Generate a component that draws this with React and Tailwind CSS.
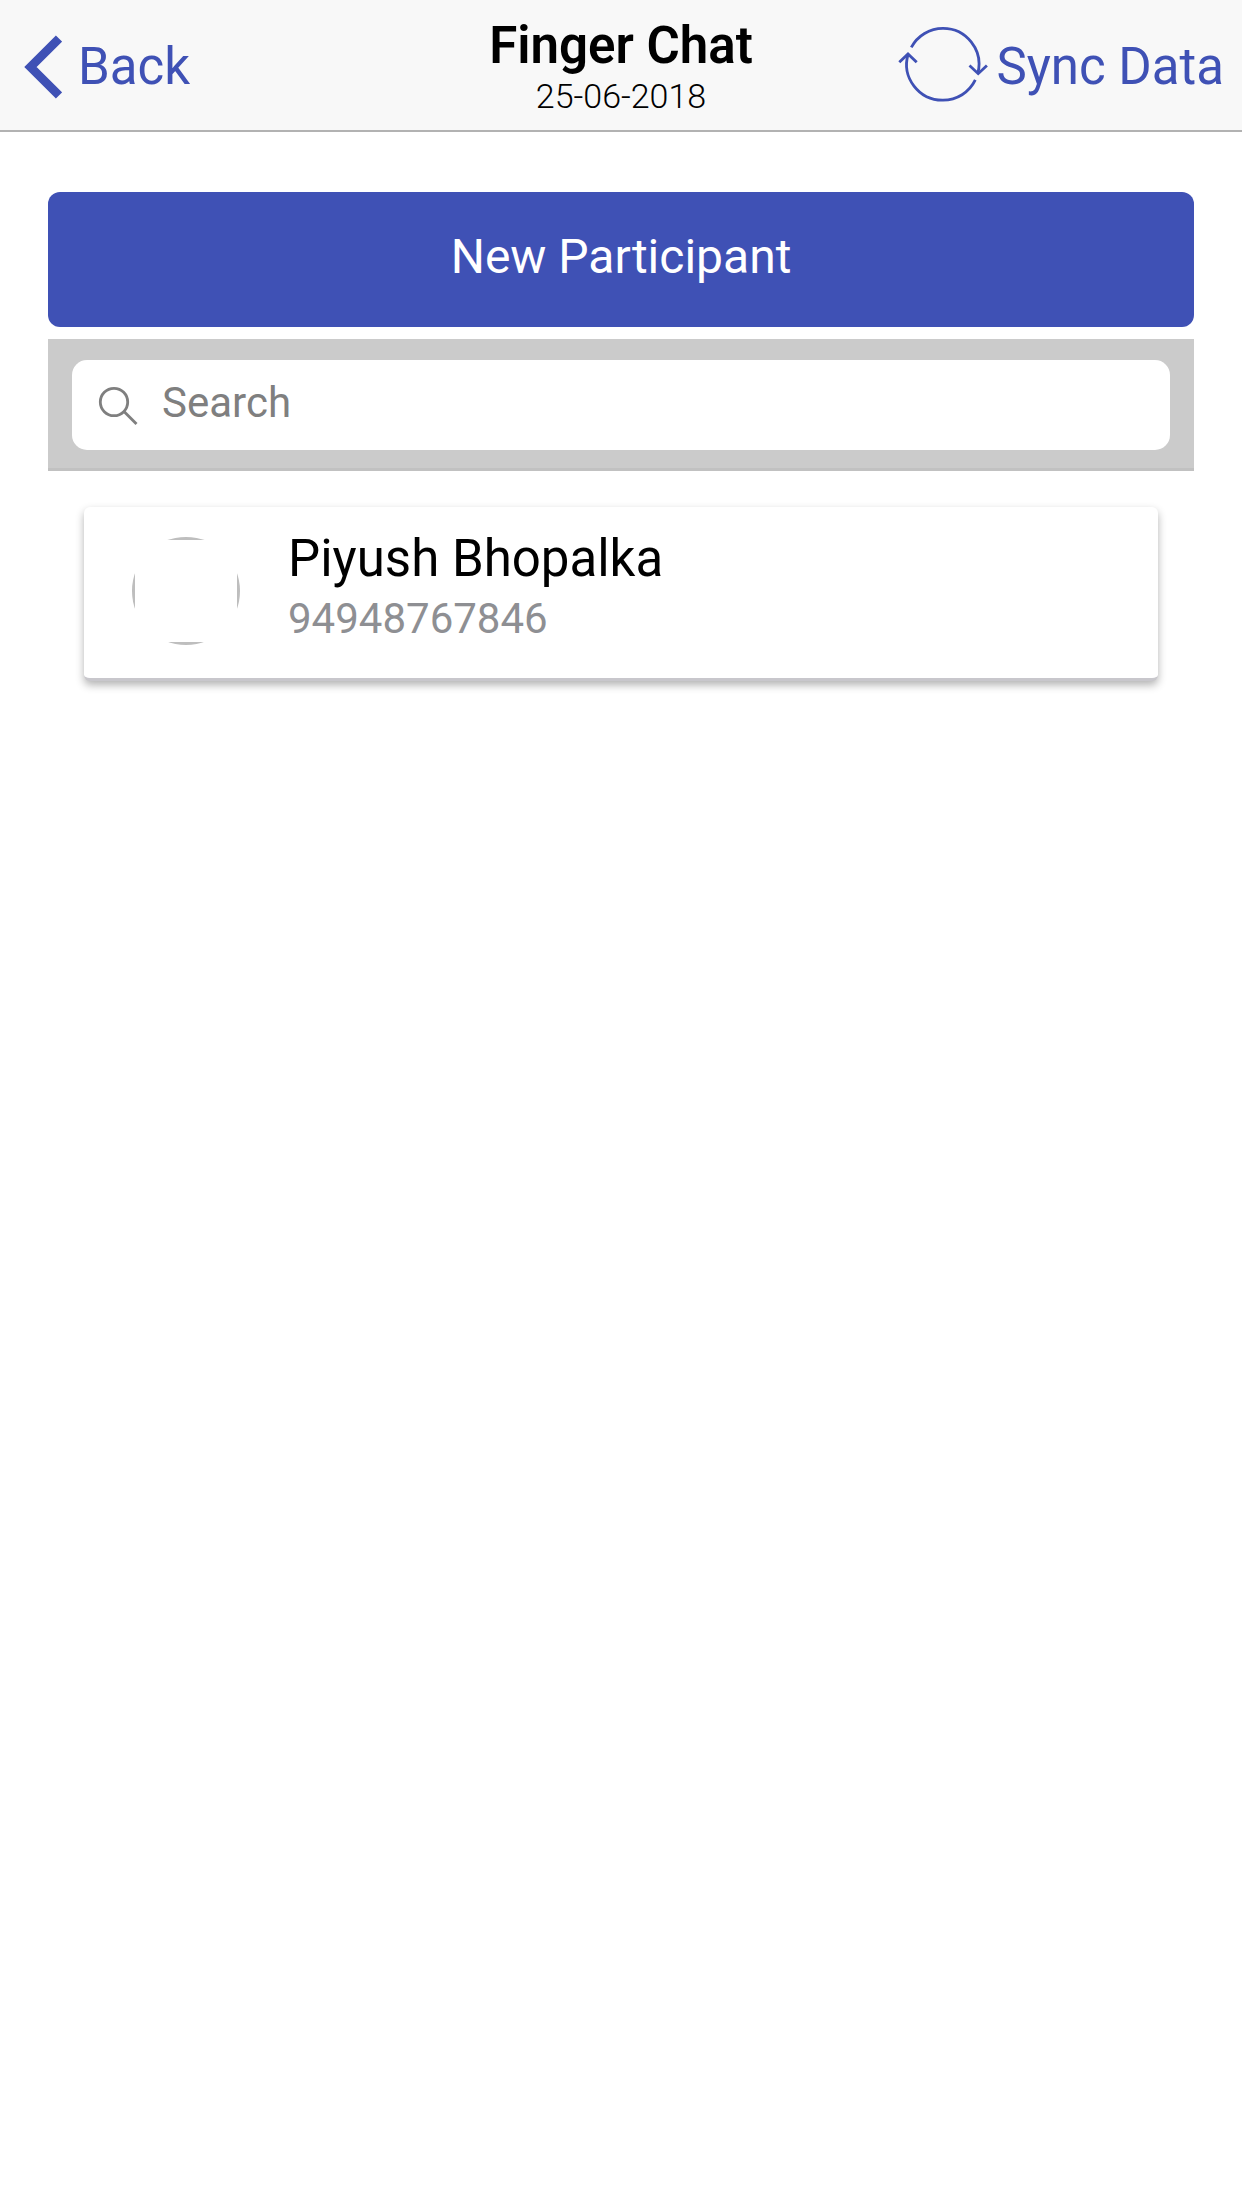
import React from "react";

const participants = [{ name: "Piyush Bhopalka", phone: "94948767846" }];

function ChevronLeft() {
  return (
    <svg className="h-16 w-10 shrink-0" viewBox="0 0 40 64" fill="none" aria-hidden="true">
      <path d="M37 3.500 L8.500 32 L37 60.500" stroke="currentColor" strokeWidth="8.8" />
    </svg>
  );
}

function SyncIcon() {
  return (
    <svg
      className="h-20 w-[90px] shrink-0"
      viewBox="0 0 90 80"
      fill="none"
      stroke="currentColor"
      strokeWidth="2.8"
      aria-hidden="true"
    >
      <path d="M13.300 20.450 A35.900 35.900 0 0 1 45 1.400 A35.900 35.900 0 0 1 79.900 46" />
      <path d="M77.300 52.900 A35.900 35.900 0 0 1 45 73.200 A35.900 35.900 0 0 1 10 27.500" />
      <path d="M1.300 35.300 L10 26.900 L18.700 35.300" />
      <path d="M71.500 38.500 L80.200 46.700 L88.900 38.500" />
    </svg>
  );
}

function SearchIcon() {
  return (
    <svg
      className="size-10 shrink-0"
      viewBox="0 0 40 40"
      fill="none"
      stroke="currentColor"
      strokeWidth="2.8"
      aria-hidden="true"
    >
      <circle cx="16" cy="17" r="13.7" />
      <path d="M25.500 26 L38.500 39" />
    </svg>
  );
}

function Header() {
  return (
    <header className="grid h-[132px] grid-cols-[1fr_auto_1fr] items-center border-b-2 border-[#b2b2b2] bg-[#f8f8f8]">
      <button
        type="button"
        className="flex items-center gap-4 justify-self-start pt-1 pl-[22px] text-[51px] leading-[60px] text-[#3f51b5]"
      >
        <ChevronLeft />
        Back
      </button>
      <div className="pt-0.5 text-center text-black">
        <h1 className="text-[51px] leading-[60px] font-semibold">Finger Chat</h1>
        <p className="text-[34px] leading-[41px] font-light">25-06-2018</p>
      </div>
      <button
        type="button"
        className="flex items-center gap-2 justify-self-end pt-1 pr-[18px] text-[51px] leading-[60px] whitespace-nowrap text-[#3f51b5]"
      >
        <SyncIcon />
        Sync Data
      </button>
    </header>
  );
}

function SearchBar() {
  return (
    <div className="mt-3 border-b-[3px] border-[#c1c1c1] bg-[#cbcbcb] px-6 pt-[21px] pb-[18px]">
      <label className="flex h-[90px] items-center gap-6 rounded-[15px] bg-white px-[26px] text-[#7f7f7f]">
        <SearchIcon />
        <input
          type="search"
          placeholder="Search"
          aria-label="Search"
          className="h-full min-w-0 flex-1 bg-transparent pb-1.5 text-[42px] text-black outline-none placeholder:text-[#7f7f7f]"
        />
      </label>
    </div>
  );
}

function Avatar() {
  return (
    <div className="mt-2 flex size-[108px] shrink-0 items-center justify-center rounded-full bg-[#bebebe]">
      <div className="size-[102px] bg-white" />
    </div>
  );
}

function ParticipantCard({ name, phone }) {
  return (
    <li className="flex items-start gap-12 rounded-md border-b-[3px] border-[#c8c7cc] bg-white px-12 pt-[22px] pb-[33px] shadow-[0_4px_8px_rgba(0,0,0,0.3)]">
      <Avatar />
      <div>
        <h2 className="text-[51px] leading-[60px] text-black">{name}</h2>
        <p className="mt-1.5 text-[42px] leading-[48px] text-[#8e8f93]">{phone}</p>
      </div>
    </li>
  );
}

export default function App() {
  return (
    <div className="min-h-screen bg-white font-['Roboto',sans-serif]">
      <Header />
      <main className="px-12 pt-[60px]">
        <button
          type="button"
          className="flex h-[135px] w-full items-center justify-center rounded-xl bg-[#3f51b5] pb-1.5 text-[48px] leading-[56px] text-white"
        >
          New Participant
        </button>
        <SearchBar />
        <ul className="mx-9 mt-9 flex flex-col gap-6">
          {participants.map((p) => (
            <ParticipantCard key={p.phone} {...p} />
          ))}
        </ul>
      </main>
    </div>
  );
}
